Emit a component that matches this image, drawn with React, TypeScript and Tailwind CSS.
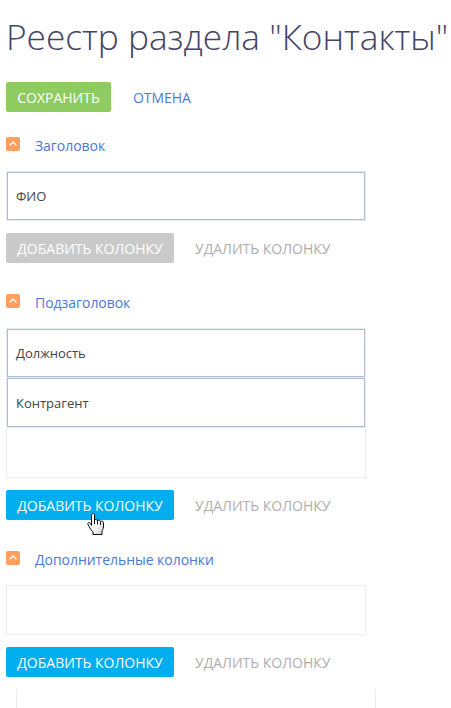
import React from "react";

function Heading({ text }: { text: string }) {
  return (
    <div className="flex h-[18px] items-center">
      <span className="mb-1 flex h-[14px] w-[14px] shrink-0 items-center justify-center rounded-[2px] bg-[#ff9e5e]">
        <svg width="14" height="14" viewBox="0 0 14 14" fill="none" stroke="#fff" strokeWidth="1.3">
          <path d="M3.5 8.5 7 5l3.5 3.5" />
        </svg>
      </span>
      <span className="ml-[15px] text-[14px] leading-[18px] tracking-[-0.04px] text-[#4c78d8]">{text}</span>
    </div>
  );
}

function Actions({ disabled = false }: { disabled?: boolean }) {
  return (
    <div className="flex h-[30px] items-center text-[14px] whitespace-nowrap">
      <button className={`h-[30px] w-[168px] rounded-[2px] text-white ${disabled ? "bg-[#cacaca]" : "bg-[#00aeef]"}`}>
        ДОБАВИТЬ КОЛОНКУ
      </button>
      <button className="ml-[21px] text-[#aeaeae]">УДАЛИТЬ КОЛОНКУ</button>
    </div>
  );
}

function Field({ text }: { text: string }) {
  return (
    <div className="flex h-[48px] items-center border border-[#aebdd3] pt-px pl-[8px] text-[13px] leading-[19px] text-[#444]">{text}</div>
  );
}

export default function App() {
  return (
    <main className="relative h-[708px] w-[451px] overflow-hidden bg-white pl-[6px] font-['Open_Sans',sans-serif]">
      <h1 className="h-[82px] pt-[12px] text-[35.25px] leading-[49px] font-light whitespace-nowrap text-[#444466]">Реестр раздела "Контакты"</h1>
      <div className="flex h-[30px] items-center text-[14px]">
        <button className="h-[30px] w-[105px] rounded-[2px] bg-[#8ecb60] text-white">СОХРАНИТЬ</button>
        <button className="ml-[22px] tracking-[-0.04px] text-[#4c78d8]">ОТМЕНА</button>
      </div>
      <section className="pt-[25px]">
        <Heading text="Заголовок" />
        <div className="mt-[16px] mb-[12px] h-[50px] w-[360px] border border-[#e8ebef]">
          <Field text="ФИО" />
        </div>
        <Actions disabled />
      </section>
      <section className="pt-[31px]">
        <Heading text="Подзаголовок" />
        <div className="mt-[16px] mb-[12px] h-[150px] w-[360px] border border-[#ececec]">
          <Field text="Должность" />
          <div className="h-px bg-[#e3ebf6]" />
          <div className="flex h-[49px] items-center border border-[#aebdd3] pt-px pl-[8px] text-[13px] leading-[19px] text-[#444]">Контрагент</div>
          <div className="h-px bg-[#e8ebef]" />
        </div>
        <Actions />
      </section>
      <section className="pt-[31px]">
        <Heading text="Дополнительные колонки" />
        <div className="mt-[16px] mb-[12px] h-[50px] w-[360px] border border-[#ececec]" />
        <Actions />
      </section>
      <div className="mt-[12px] ml-[10px] h-[19px] w-[360px] border-x border-[#ececec]" />
      <svg className="absolute top-[513px] left-[87px]" width="17" height="22" viewBox="0 0 17 22">
        <defs>
          <linearGradient id="hand" x1="0" y1="0" x2="1" y2="1">
            <stop offset="0.5" stopColor="#fff" />
            <stop offset="1" stopColor="#c8c8c8" />
          </linearGradient>
        </defs>
        <path
          d="M4.5 12.5V2c0-2 3-2 3 0v5.5c.3-1.5 3-1.2 3 .4.4-1.3 3-.9 3 .7.5-1 3-.6 3 1.2V14c0 2-1.5 3-1.5 5v2.5h-9V19c-1.6-1.5-3.4-4.2-5-7.5-.9-1.9 1-2.7 2.2-1.2z"
          fill="url(#hand)"
          stroke="#111"
          strokeLinejoin="round"
        />
        <path d="M7.5 7v4M10.5 8v3.5M13.5 9v3" stroke="#111" fill="none" />
      </svg>
    </main>
  );
}
